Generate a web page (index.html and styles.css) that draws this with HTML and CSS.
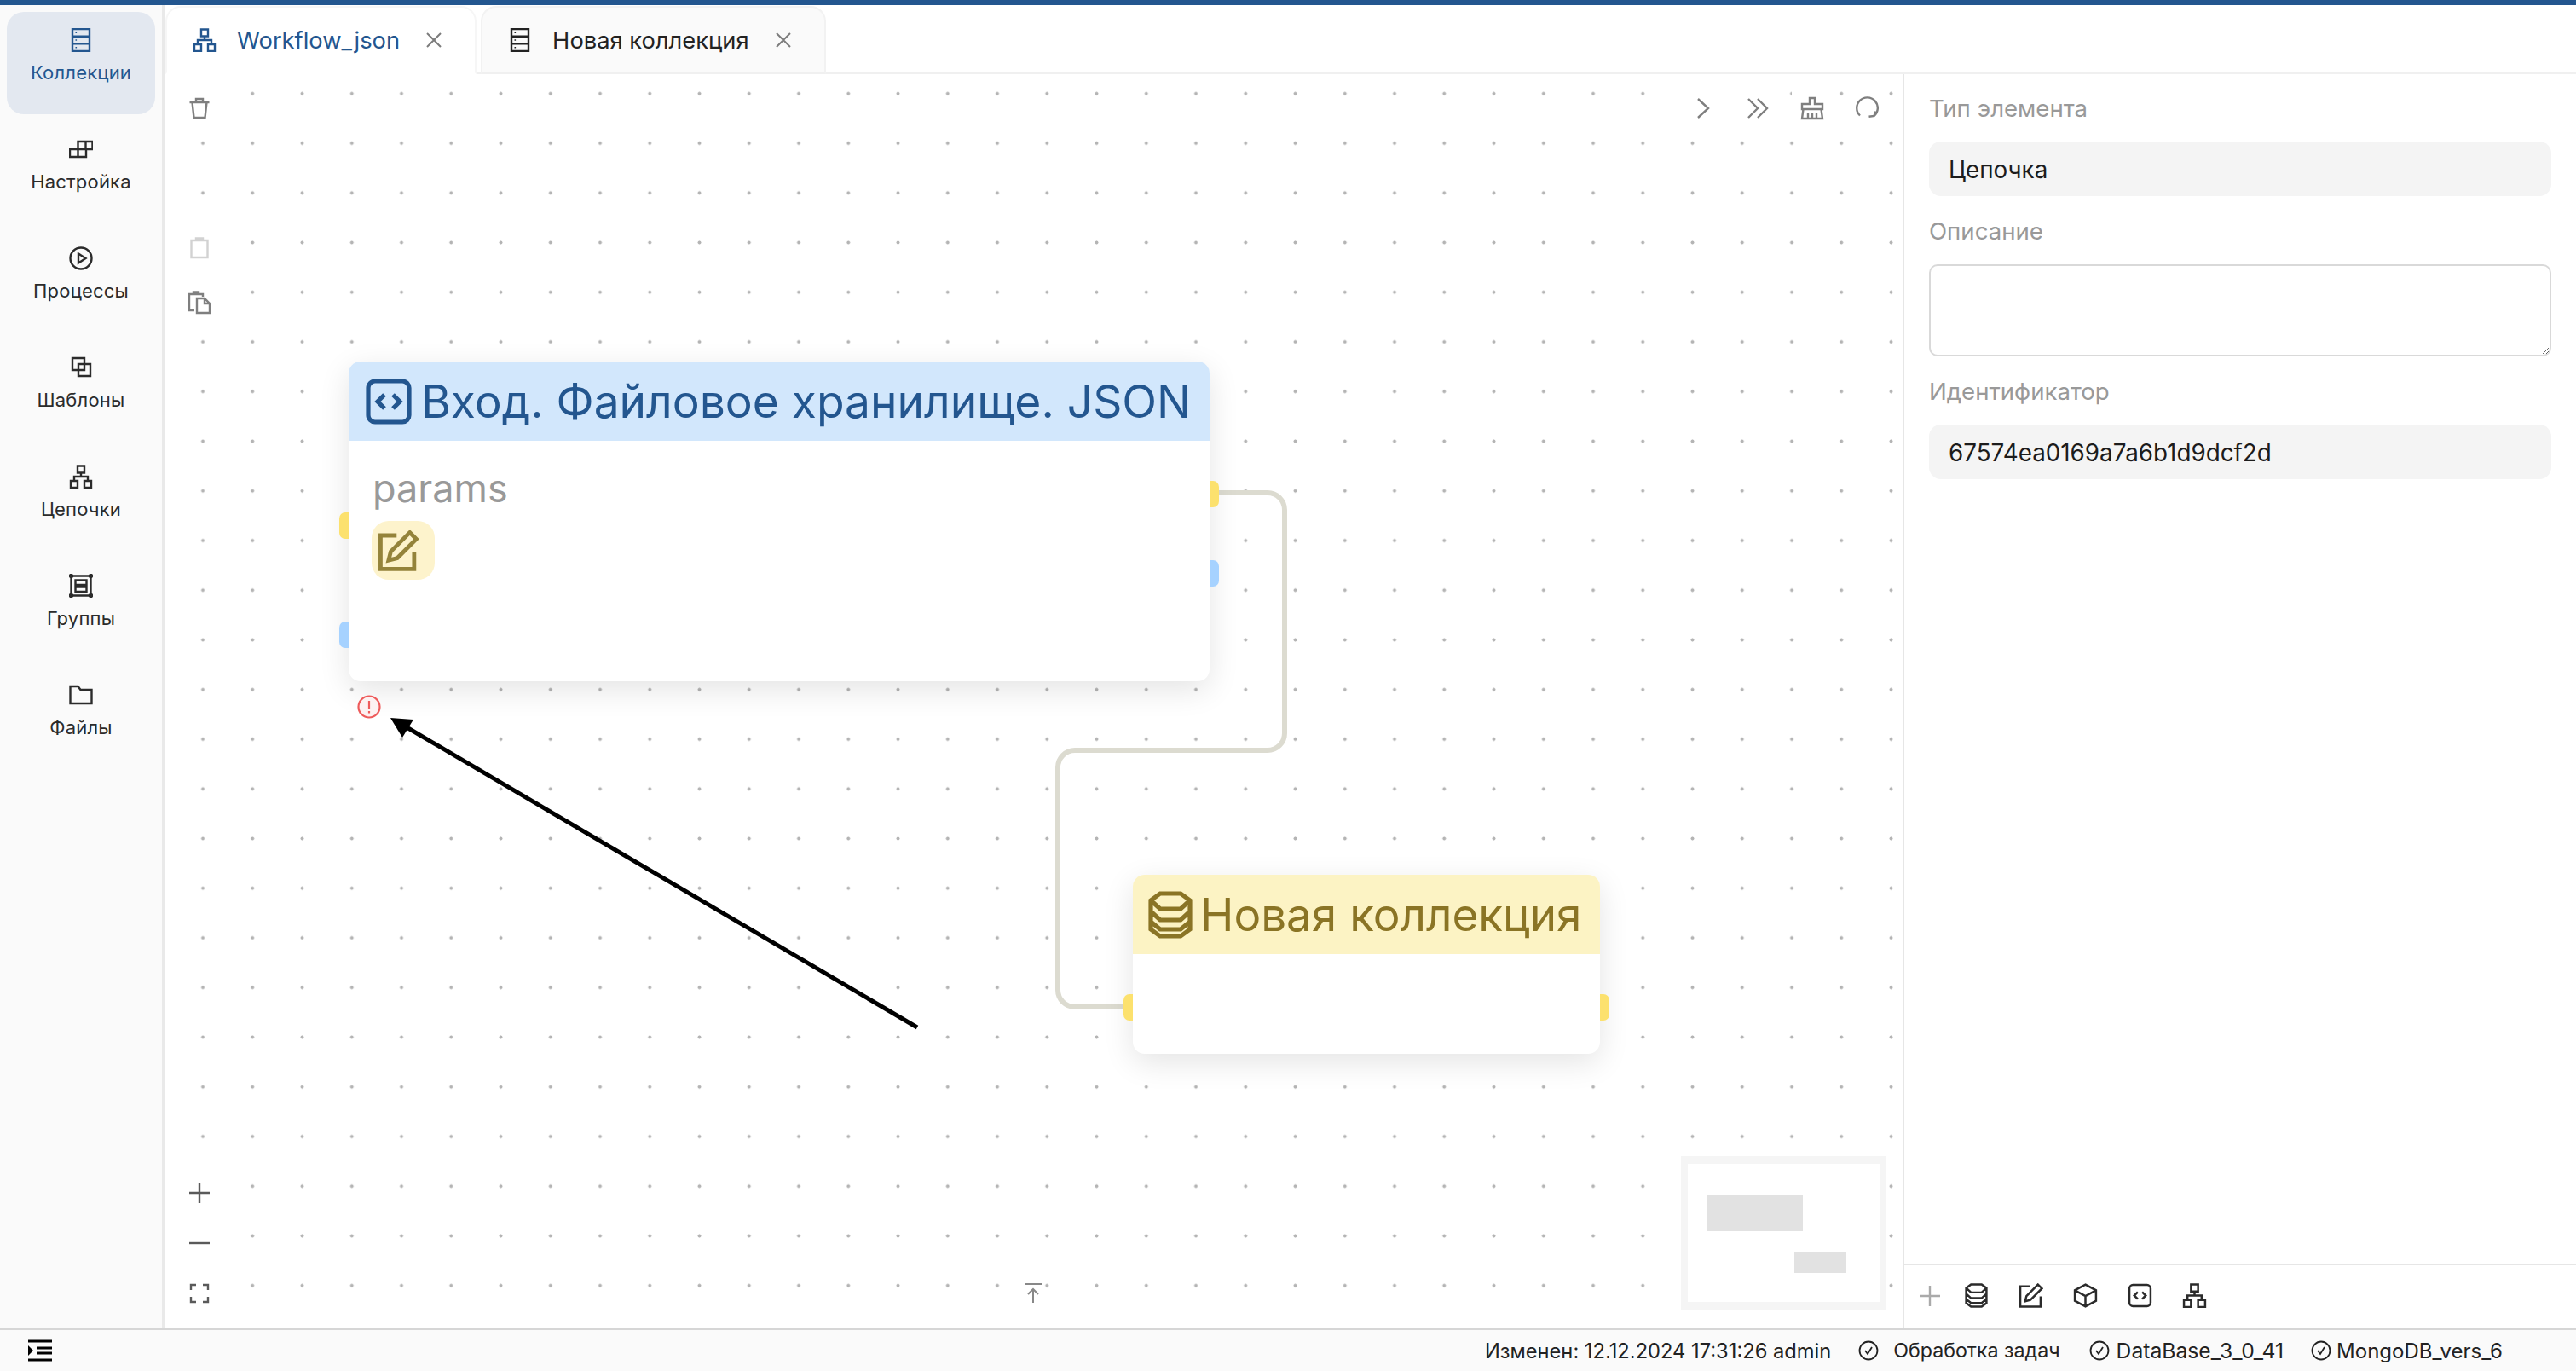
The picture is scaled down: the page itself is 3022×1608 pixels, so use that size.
FILE: index.html
```html
<!DOCTYPE html>
<html lang="ru">

<head>
    <meta charset="UTF-8">
    <meta name="viewport" content="width=device-width, initial-scale=1.0">
    <title>Workflow_json</title>
    <link rel="stylesheet" href="styles.css">
</head>

<body>
    <!-- icon sprite -->
    <svg class="sprite" xmlns="http://www.w3.org/2000/svg">
        <symbol id="i-server" viewBox="0 0 28 28"><path d="M4 1h20v26H4zM4 9.7h20M4 18.3h20"/><path class="dot" d="M7.5 4.5h1.6v1.6H7.5zM7.5 13.2h1.6v1.6H7.5zM7.5 21.9h1.6v1.6H7.5z"/></symbol>
        <symbol id="i-blocks" viewBox="0 0 28 28"><path d="M1 14h19v9H1zM10.500 14v9M10.500 14V5h17v9h-7.500M19.500 5v9"/></symbol>
        <symbol id="i-play" viewBox="0 0 28 28"><circle cx="14" cy="14" r="12.500"/><path d="M11 8.500l8.500 5.500-8.500 5.500z"/></symbol>
        <symbol id="i-layers" viewBox="0 0 28 28"><path d="M4 3h14v14H4zM11 10h14v14H11z"/></symbol>
        <symbol id="i-tree" viewBox="0 0 28 28"><path d="M10 1.500h8v8h-8zM2 19h8v8H2zM18 19h8v8h-8zM14 9.500V14M6 19v-5h16v5"/></symbol>
        <symbol id="i-group" viewBox="0 0 28 28"><path d="M2.500 2.500h23v23h-23zM7.500 7.500h13v5.500h-13zM7.500 15.500h13V21h-13z"/><circle cx="2.500" cy="2.500" r="1.500"/><circle cx="25.500" cy="2.500" r="1.500"/><circle cx="2.500" cy="25.500" r="1.500"/><circle cx="25.500" cy="25.500" r="1.500"/></symbol>
        <symbol id="i-folder" viewBox="0 0 28 28"><path d="M1.500 4h9l3 4h13v16h-25z"/></symbol>
        <symbol id="i-close" viewBox="0 0 20 20"><path d="M2 2l16 16M18 2L2 18"/></symbol>
        <symbol id="i-trash" viewBox="0 0 28 28"><path d="M2.500 7h23M10 7V3h8v4M5.500 7l2 18h13l2-18"/></symbol>
        <symbol id="i-clip" viewBox="0 0 28 28"><path d="M4.500 5h19v20h-19zM10 5V2.500h8V5"/></symbol>
        <symbol id="i-paste" viewBox="0 0 28 28"><path d="M8 23H2V4h16v3M7 4V1.500h6V4M11 9h9l6 6v11H11zM20 9v6h6"/></symbol>
        <symbol id="i-next" viewBox="0 0 28 28"><path d="M8 3l12 11L8 25"/></symbol>
        <symbol id="i-next2" viewBox="0 0 28 28"><path d="M3 3l11 11L3 25M14 3l11 11-11 11"/></symbol>
        <symbol id="i-brush" viewBox="0 0 28 28"><path d="M11 9V2h6v7h9v6H2V9zM3.500 15L2 26h24l-1.500-11M9 20v6M14 20v6M19 20v6"/></symbol>
        <symbol id="i-refresh" viewBox="0 0 28 28"><path d="M6 22.500A12.300 12.300 0 1 1 22.500 23M24 17.500l-1.500 5.500-6 .8"/></symbol>
        <symbol id="i-plus" viewBox="0 0 24 24"><path d="M12 0v24M0 12h24"/></symbol>
        <symbol id="i-minus" viewBox="0 0 24 24"><path d="M0 12h24"/></symbol>
        <symbol id="i-fit" viewBox="0 0 24 24"><path d="M2 8V2h6M16 2h6v6M22 16v6h-6M8 22H2v-6"/></symbol>
        <symbol id="i-top" viewBox="0 0 24 24"><path d="M2 2h20M12 24V8M6 14l6-6 6 6"/></symbol>
        <symbol id="i-edit" viewBox="0 0 28 28"><path d="M13 3.500H2v23h23V15"/><path d="M22 1.500l4.500 4.500L13.500 19l-6 1.500 1.500-6z"/></symbol>
        <symbol id="i-db" viewBox="0 0 28 28"><path d="M8 1.500h12l5.500 4v17l-5.500 4H8l-5.500-4v-17zM2.500 5.500l5.500 5h12l5.500-5M2.500 12l5.500 5h12l5.500-5M2.500 18l5.500 4.500h12l5.500-4.500"/></symbol>
        <symbol id="i-box" viewBox="0 0 28 28"><path d="M14 1.500l12 6.500v12l-12 6.500L2 20V8zM2 8l12 6.500L26 8M14 14.500v12"/></symbol>
        <symbol id="i-code" viewBox="0 0 28 28"><rect x="2" y="2" width="24" height="24" rx="4"/><path d="M11.500 10l-4 4 4 4M16.500 10l4 4-4 4"/></symbol>
        <symbol id="i-check" viewBox="0 0 24 24"><circle cx="12" cy="12" r="10.500"/><path d="M8 12l3 4 5-8"/></symbol>
        <symbol id="i-indent" viewBox="0 0 28 26"><path d="M0 2h28M10 10h18M10 16h18M0 24h28"/><path class="dot" d="M0 7l6 6-6 6z"/></symbol>
    </svg>

    <div class="app">
        <aside class="sidebar">
            <a class="side-item active"><svg class="side-icon"><use href="#i-server"/></svg><span>Коллекции</span></a>
            <a class="side-item"><svg class="side-icon"><use href="#i-blocks"/></svg><span>Настройка</span></a>
            <a class="side-item"><svg class="side-icon"><use href="#i-play"/></svg><span>Процессы</span></a>
            <a class="side-item"><svg class="side-icon"><use href="#i-layers"/></svg><span>Шаблоны</span></a>
            <a class="side-item"><svg class="side-icon"><use href="#i-tree"/></svg><span>Цепочки</span></a>
            <a class="side-item"><svg class="side-icon"><use href="#i-group"/></svg><span>Группы</span></a>
            <a class="side-item"><svg class="side-icon"><use href="#i-folder"/></svg><span>Файлы</span></a>
        </aside>

        <div class="content">
            <div class="tabs">
                <div class="tab tab-active">
                    <svg class="tab-icon"><use href="#i-tree"/></svg>
                    <span class="tab-name">Workflow_json</span>
                    <svg class="tab-close"><use href="#i-close"/></svg>
                </div>
                <div class="tab">
                    <svg class="tab-icon"><use href="#i-server"/></svg>
                    <span class="tab-name">Новая коллекция</span>
                    <svg class="tab-close"><use href="#i-close"/></svg>
                </div>
            </div>

            <div class="workspace">
                <main class="canvas">
                    <svg class="wires" viewBox="0 0 2038 1471">
                        <path class="wire" d="M1236 491H1293a20 20 0 0 1 20 20V773a20 20 0 0 1-20 20H1067a20 20 0 0 0-20 20V1074a20 20 0 0 0 20 20H1126"/>
                        <path class="pointer" d="M882 1118L278 763"/>
                        <polygon class="pointer-head" points="264,755 291,757 278,778"/>
                    </svg>

                    <div class="node node-input">
                        <span class="port port-yellow port-left" style="top: 177px"></span>
                        <span class="port port-blue port-left" style="top: 305px"></span>
                        <span class="port port-yellow port-right" style="top: 140px"></span>
                        <span class="port port-blue port-right" style="top: 233px"></span>
                        <div class="node-head">
                            <svg class="node-icon"><use href="#i-code"/></svg>
                            <span>Вход. Файловое хранилище. JSON</span>
                        </div>
                        <div class="node-body">
                            <div class="node-param">params</div>
                            <button class="node-edit"><svg><use href="#i-edit"/></svg></button>
                        </div>
                    </div>

                    <div class="node node-coll">
                        <span class="port port-yellow port-left" style="top: 140px"></span>
                        <span class="port port-yellow port-right" style="top: 140px"></span>
                        <div class="node-head">
                            <svg class="node-icon"><use href="#i-db"/></svg>
                            <span>Новая коллекция</span>
                        </div>
                    </div>

                    <svg class="node-error" viewBox="0 0 28 28">
                        <circle cx="14" cy="14" r="12.500"/>
                        <path d="M14 7v9M14 19v2.500"/>
                    </svg>

                    <div class="tools tools-left">
                        <button class="tool"><svg><use href="#i-trash"/></svg></button>
                        <div class="tools-gap"></div>
                        <button class="tool tool-off"><svg><use href="#i-clip"/></svg></button>
                        <button class="tool"><svg><use href="#i-paste"/></svg></button>
                    </div>

                    <div class="tools tools-zoom">
                        <button class="tool tool-dark"><svg class="small"><use href="#i-plus"/></svg></button>
                        <button class="tool tool-dark"><svg class="small"><use href="#i-minus"/></svg></button>
                        <button class="tool tool-dark"><svg class="small"><use href="#i-fit"/></svg></button>
                    </div>

                    <div class="tools tools-run">
                        <button class="tool"><svg><use href="#i-next"/></svg></button>
                        <button class="tool"><svg><use href="#i-next2"/></svg></button>
                        <button class="tool"><svg><use href="#i-brush"/></svg></button>
                        <button class="tool tool-clear"><svg><use href="#i-refresh"/></svg></button>
                    </div>

                    <svg class="to-top"><use href="#i-top"/></svg>

                    <div class="minimap">
                        <div class="minimap-inner">
                            <span class="mini-a"></span>
                            <span class="mini-b"></span>
                        </div>
                    </div>
                </main>

                <aside class="panel">
                    <div class="props">
                        <label>Тип элемента</label>
                        <div class="field">Цепочка</div>
                        <label>Описание</label>
                        <textarea class="area"></textarea>
                        <label>Идентификатор</label>
                        <div class="field">67574ea0169a7a6b1d9dcf2d</div>
                    </div>
                    <div class="panel-tools">
                        <svg class="add"><use href="#i-plus"/></svg>
                        <svg><use href="#i-db"/></svg>
                        <svg><use href="#i-edit"/></svg>
                        <svg><use href="#i-box"/></svg>
                        <svg><use href="#i-code"/></svg>
                        <svg><use href="#i-tree"/></svg>
                    </div>
                </aside>
            </div>
        </div>
    </div>

    <footer class="status">
        <svg class="status-menu"><use href="#i-indent"/></svg>
        <span class="status-changed">Изменен: 12.12.2024 17:31:26 admin</span>
        <span class="status-item status-tasks"><svg><use href="#i-check"/></svg>Обработка задач</span>
        <span class="status-item status-db"><svg><use href="#i-check"/></svg>DataBase_3_0_41</span>
        <span class="status-item"><svg><use href="#i-check"/></svg>MongoDB_vers_6</span>
    </footer>
</body>

</html>
```

FILE: styles.css
```css
* {
    box-sizing: border-box;
}

html, body {
    margin: 0;
    height: 100%;
}

body {
    display: flex;
    flex-direction: column;
    border-top: 6px solid #23568f;
    font-family: Inter, "Noto Sans", sans-serif;
    color: #1f1f1f;
    background-color: #fff;
    overflow: hidden;
}

svg {
    fill: none;
    stroke: currentColor;
    stroke-width: 2.4;
}

.sprite {
    display: none;
}

.dot {
    fill: currentColor;
    stroke: none;
}

.app {
    flex: 1;
    display: flex;
    min-height: 0;
}

/* sidebar */
.sidebar {
    width: 194px;
    flex-shrink: 0;
    display: flex;
    flex-direction: column;
    gap: 8px;
    padding: 8px 8px 0 8px;
    background-color: #fafafa;
    border-right: 4px solid #e9e9e9;
}

.side-item {
    height: 120px;
    display: flex;
    flex-direction: column;
    align-items: center;
    gap: 10px;
    padding-top: 19px;
    border-radius: 20px;
    font-size: 22px;
    line-height: 28px;
    letter-spacing: 0.2px;
    color: #2b2b2b;
}

.side-item.active {
    background-color: #e3e8f0;
    color: #23568f;
}

.side-icon {
    width: 28px;
    height: 28px;
}

/* tabs */
.content {
    flex: 1;
    min-width: 0;
    display: flex;
    flex-direction: column;
}

.tabs {
    height: 81px;
    flex-shrink: 0;
    display: flex;
    align-items: flex-end;
    gap: 5px;
    padding-top: 1px;
    border-bottom: 2px solid #f0f0f0;
}

.tab {
    height: 80px;
    margin-bottom: -2px;
    display: flex;
    align-items: center;
    padding: 0 38px 0 30px;
    font-size: 27.3px;
    color: #222;
    background-color: #fafafa;
    border: 2px solid #f2f2f2;
    border-bottom: 2px solid #f0f0f0;
    border-radius: 18px 18px 0 0;
}

.tab-active {
    color: #23568f;
    background-color: #fff;
    border-color: #f6f6f6;
    border-bottom-color: #fff;
}

.tab-icon {
    width: 28px;
    height: 28px;
    margin-right: 24px;
}

.tab-close {
    width: 20px;
    height: 20px;
    margin-left: 30px;
    color: #7c7c7c;
    stroke-width: 2;
}

/* canvas */
.workspace {
    flex: 1;
    min-height: 0;
    display: flex;
}

.canvas {
    position: relative;
    flex: 1;
    min-width: 0;
    overflow: hidden;
    background-image: radial-gradient(circle, #b4b4b4 1.7px, transparent 2.3px);
    background-size: 58.25px 58.25px;
    background-position: 14.9px -6.4px;
}

.wires {
    position: absolute;
    left: 0;
    top: 0;
    width: 2038px;
    height: 1471px;
}

.wire {
    stroke: #dcdbd0;
    stroke-width: 6;
}

.pointer {
    stroke: #000;
    stroke-width: 5;
}

.pointer-head {
    fill: #000;
    stroke: none;
}

.node {
    position: absolute;
    background-color: #fff;
    border-radius: 14px;
    box-shadow: 0 10px 36px rgba(0, 0, 0, 0.11);
}

.node-input {
    left: 215px;
    top: 337px;
    width: 1010px;
    height: 375px;
}

.node-coll {
    left: 1135px;
    top: 939px;
    width: 548px;
    height: 210px;
}

.node-head {
    height: 93px;
    display: flex;
    align-items: center;
    border-radius: 14px 14px 0 0;
}

.node-input .node-head {
    gap: 10px;
    padding-left: 19px;
    font-size: 53.3px;
    color: #23568f;
    background-color: #d2e7fc;
}

.node-coll .node-head {
    gap: 7px;
    padding-left: 16px;
    font-size: 53px;
    color: #8a7425;
    background-color: #fcf3c4;
}

.node-icon {
    width: 56px;
    height: 56px;
    stroke-width: 2.600;
}

.node-body {
    padding: 30px 28px 0;
}

.node-param {
    font-size: 45px;
    line-height: 52px;
    color: #999;
}

.node-edit {
    display: flex;
    align-items: center;
    justify-content: flex-start;
    width: 74px;
    height: 69px;
    margin-top: 12px;
    margin-left: -1px;
    padding: 0 0 0 7px;
    border: none;
    border-radius: 20px;
    color: #94833a;
    background-color: #fdf3cc;
}

.node-edit svg {
    width: 48px;
    height: 48px;
    stroke-width: 2.800;
}

/* ports stick out of the card edge */
.port {
    position: absolute;
    width: 11px;
    height: 31px;
}

.port-left {
    left: -11px;
    border-radius: 7px 0 0 7px;
}

.port-right {
    right: -11px;
    border-radius: 0 7px 7px 0;
}

.port-yellow {
    background-color: #fce16e;
}

.port-blue {
    background-color: #a6d2ff;
}

.node-error {
    position: absolute;
    left: 225px;
    top: 728px;
    width: 28px;
    height: 28px;
    color: #ee5b5b;
    fill: #fdf1f1;
    stroke-width: 2.2;
}

/* canvas toolbars */
.tools {
    position: absolute;
    display: flex;
}

.tools-left {
    left: 18px;
    top: 13px;
    flex-direction: column;
}

.tools-gap {
    height: 105px;
}

.tools-zoom {
    left: 18px;
    top: 1285px;
    flex-direction: column;
}

.tools-run {
    right: 18px;
    top: 13px;
    gap: 16px;
}

.tool {
    display: flex;
    align-items: center;
    justify-content: center;
    width: 44px;
    height: 54px;
    margin-bottom: 5px;
    padding: 0;
    border: none;
    color: #7f7f7f;
    background-color: #fff;
}

.tools-run .tool {
    width: 48px;
    margin-bottom: 0;
}

.tool-clear {
    background-color: transparent;
}

.tool-off {
    margin-bottom: 10px;
    color: #d2d2d2;
}

.tool-dark {
    color: #5a5a5a;
}

.tool svg {
    width: 28px;
    height: 28px;
}

.tool svg.small {
    width: 24px;
    height: 24px;
}

.to-top {
    position: absolute;
    left: 1006px;
    top: 1417px;
    width: 24px;
    height: 24px;
    color: #888;
    stroke-width: 2;
}

.minimap {
    position: absolute;
    left: 1778px;
    top: 1269px;
    width: 240px;
    height: 180px;
    padding: 9px 7px 9px 8px;
    background-color: #f5f5f5;
}

.minimap-inner {
    position: relative;
    height: 100%;
    background-color: #fff;
}

.mini-a, .mini-b {
    position: absolute;
    background-color: #e2e2e2;
}

.mini-a {
    left: 23px;
    top: 36px;
    width: 112px;
    height: 43px;
}

.mini-b {
    left: 125px;
    top: 104px;
    width: 61px;
    height: 24px;
}

/* properties panel */
.panel {
    width: 790px;
    flex-shrink: 0;
    display: flex;
    flex-direction: column;
    background-color: #fff;
    border-left: 2px solid #e6e6e6;
}

.props {
    flex: 1;
    display: flex;
    flex-direction: column;
    padding: 22px 29px 0;
}

.props label {
    font-size: 27.6px;
    line-height: 36px;
    margin-bottom: 21px;
    color: #999;
}

.field {
    height: 64px;
    margin-bottom: 23px;
    padding: 0 23px;
    font-size: 27.8px;
    line-height: 66px;
    color: #1c1c1c;
    background-color: #f4f4f4;
    border-radius: 14px;
}

.area {
    display: block;
    height: 108px;
    margin: 0 0 23px;
    border: 2px solid #d9d9d9;
    border-radius: 10px;
    background-color: #fff;
    resize: vertical;
    outline: none;
}

.panel-tools {
    height: 76px;
    flex-shrink: 0;
    display: flex;
    align-items: center;
    gap: 35px;
    padding: 0 0 3px 18px;
    border-top: 2px solid #e6e6e6;
    color: #2b2b2b;
}

.panel-tools svg {
    width: 29px;
    height: 29px;
}

.panel-tools .add {
    width: 24px;
    height: 24px;
    margin-right: -7px;
    color: #aaa;
}

/* status bar */
.status {
    height: 50px;
    flex-shrink: 0;
    display: flex;
    align-items: center;
    padding: 0 86px 0 33px;
    font-size: 24px;
    color: #222;
    background-color: #fafafa;
    border-top: 2px solid #d6d6d6;
}

.status-menu {
    width: 28px;
    height: 26px;
    margin-right: auto;
    color: #000;
    stroke-width: 3;
}

.status-changed {
    font-size: 23.7px;
}

.status-item {
    display: flex;
    align-items: center;
    gap: 6px;
    margin-left: 32px;
}

.status-tasks {
    gap: 17px;
    font-size: 23.2px;
}

.status-db {
    gap: 8px;
    margin-left: 34px;
    font-size: 24.7px;
}

.status-item svg {
    width: 24px;
    height: 24px;
    stroke-width: 1.800;
}
```
